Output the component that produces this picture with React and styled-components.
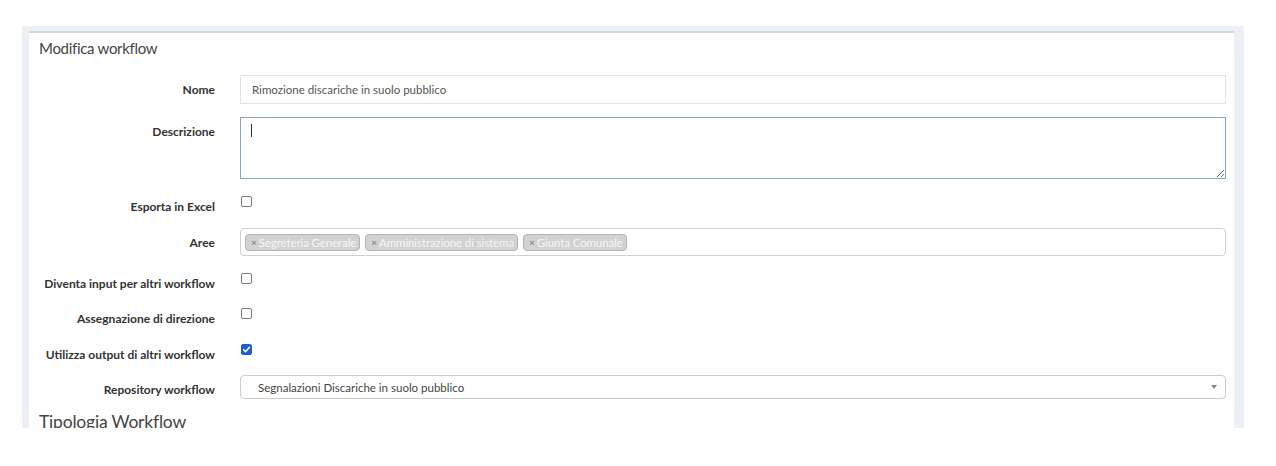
import React from "react";
import styled, { createGlobalStyle } from "styled-components";

const GlobalStyle = createGlobalStyle`
  html, body { margin: 0; padding: 0; background: #ffffff; }
  body { font-family: "Lato", "Noto Sans", sans-serif; color: #333; }
  * { box-sizing: border-box; }
`;

const Page = styled.div`
  padding: 26px 32px 0 22px;
`;

const Viewport = styled.div`
  height: 402px;
  overflow: hidden;
  background: #ecf0f5;
  padding: 5px 10px 0 7px;
`;

const Box = styled.section`
  background: #ffffff;
  border-top: 2px solid #d2d6de;
  min-height: 500px;
`;

const BoxHeader = styled.header`
  padding: 6px 10px;
`;

const BoxTitle = styled.h3`
  margin: 0;
  font-size: 15px;
  letter-spacing: -0.3px;
  line-height: 18px;
  font-weight: 400;
  color: #444;
`;

const BoxBody = styled.div`
  padding: 12px 8px 0 10px;
`;

const FormRow = styled.div`
  display: grid;
  grid-template-columns: 201px 1fr;
  align-items: start;
  margin-bottom: 13px;
`;

const Label = styled.label`
  font-size: 12px;
  font-weight: 700;
  line-height: 15px;
  padding: 7px 25px 0 0;
  text-align: right;
  color: #333;
  white-space: nowrap;
`;

const TextInput = styled.input`
  display: block;
  width: 100%;
  height: 29px;
  border: 1px solid #e2e2e2;
  border-radius: 0;
  padding: 0 11px;
  font-family: inherit;
  font-size: 11.5px;
  color: #555;
  background: #fff;
  outline: none;
`;

const AreaWrap = styled.div`
  position: relative;
`;

const TextArea = styled.textarea`
  display: block;
  width: 100%;
  height: 62px;
  border: 1px solid #7fa6c9;
  border-radius: 0;
  padding: 6px 10px;
  font-family: inherit;
  font-size: 11.5px;
  color: #555;
  background: #fff;
  outline: none;
  resize: vertical;
`;

const Caret = styled.span`
  position: absolute;
  left: 11px;
  top: 7px;
  width: 1px;
  height: 13px;
  background: #333;
`;

const CheckCell = styled.div`
  height: 22.5px;
  padding-top: 4px;
  padding-left: 1px;
`;

const CheckBox = styled.span`
  display: flex;
  align-items: center;
  justify-content: center;
  width: 11px;
  height: 11px;
  border-radius: 2px;
  border: 1px solid ${(p) => (p.$checked ? "#1d5fd3" : "#7a7a7a")};
  background: ${(p) => (p.$checked ? "#1d5fd3" : "#fff")};
`;

const MultiSelect = styled.div`
  display: flex;
  align-items: flex-start;
  gap: 5px;
  height: 28px;
  border: 1px solid #d0d0d0;
  border-radius: 4px;
  padding: 5px 4px 0 4px;
  background: #fff;
`;

const Tag = styled.span`
  display: inline-flex;
  align-items: center;
  height: 17px;
  padding: 0 3px 0 5px;
  background: #d2d2d2;
  border: 1px solid #b4b4b4;
  border-radius: 4px;
  color: #f7f7f7;
  font-size: 11.5px;
  letter-spacing: -0.1px;
  line-height: 15px;
  white-space: nowrap;
`;

const TagRemove = styled.span`
  color: #8a8a8a;
  font-weight: 700;
  font-size: 10px;
  margin-right: 2px;
`;

const SingleSelect = styled.div`
  position: relative;
  height: 24px;
  border: 1px solid #cccccc;
  border-radius: 4px;
  padding: 0 28px 0 17px;
  display: flex;
  align-items: center;
  font-size: 11.5px;
  color: #444;
  background: #fff;
`;

const Arrow = styled.span`
  position: absolute;
  right: 8px;
  top: 9px;
  width: 0;
  height: 0;
  border-left: 3px solid transparent;
  border-right: 3px solid transparent;
  border-top: 4px solid #888;
`;

const SectionTitle = styled.h3`
  margin: 12px 0 0 0;
  font-size: 17.5px;
  letter-spacing: -0.2px;
  line-height: 20px;
  font-weight: 400;
  color: #444;
`;

function Check({ checked }) {
  return (
    <CheckCell>
      <CheckBox $checked={checked}>
        {checked && (
          <svg width="9" height="9" viewBox="0 0 10 10">
            <path d="M1.8 5.2 L4 7.4 L8.3 2.6" fill="none" stroke="#fff" strokeWidth="1.7" strokeLinecap="round" strokeLinejoin="round" />
          </svg>
        )}
      </CheckBox>
    </CheckCell>
  );
}

const tags = ["Segreteria Generale", "Amministrazione di sistema", "Giunta Comunale"];

export default function App() {
  return (
    <>
      <GlobalStyle />
      <Page>
        <Viewport>
          <Box>
            <BoxHeader>
              <BoxTitle>Modifica workflow</BoxTitle>
            </BoxHeader>
            <BoxBody>
              <FormRow>
                <Label>Nome</Label>
                <TextInput defaultValue="Rimozione discariche in suolo pubblico" />
              </FormRow>
              <FormRow>
                <Label>Descrizione</Label>
                <AreaWrap>
                  <TextArea />
                  <Caret />
                </AreaWrap>
              </FormRow>
              <FormRow>
                <Label>Esporta in Excel</Label>
                <Check />
              </FormRow>
              <FormRow>
                <Label>Aree</Label>
                <MultiSelect>
                  {tags.map((t) => (
                    <Tag key={t}>
                      <TagRemove>×</TagRemove>
                      {t}
                    </Tag>
                  ))}
                </MultiSelect>
              </FormRow>
              <FormRow>
                <Label>Diventa input per altri workflow</Label>
                <Check />
              </FormRow>
              <FormRow>
                <Label>Assegnazione di direzione</Label>
                <Check />
              </FormRow>
              <FormRow>
                <Label>Utilizza output di altri workflow</Label>
                <Check checked />
              </FormRow>
              <FormRow>
                <Label>Repository workflow</Label>
                <SingleSelect>
                  Segnalazioni Discariche in suolo pubblico
                  <Arrow />
                </SingleSelect>
              </FormRow>
              <SectionTitle>Tipologia Workflow</SectionTitle>
            </BoxBody>
          </Box>
        </Viewport>
      </Page>
    </>
  );
}
